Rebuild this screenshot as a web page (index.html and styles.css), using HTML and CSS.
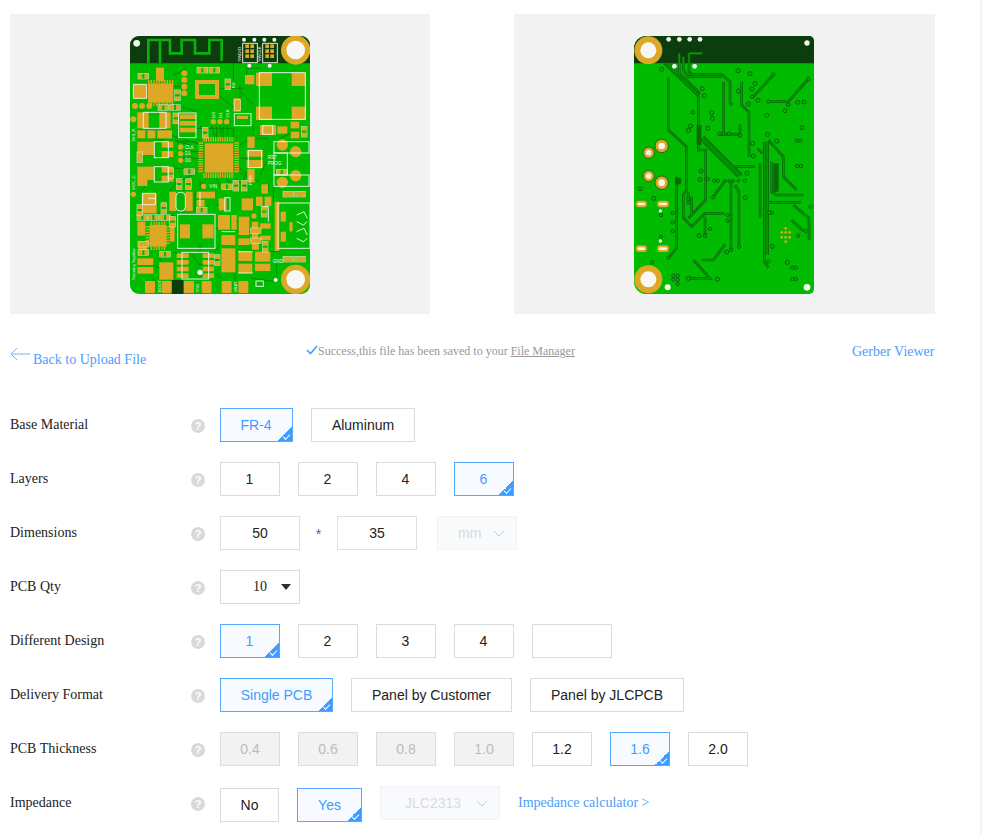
FILE: index.html
```html
<!DOCTYPE html>
<html lang="en">
<head>
<meta charset="utf-8">
<title>PCB order</title>
<link rel="stylesheet" href="styles.css">
</head>
<body>
<div class="page">
  <section class="gallery">
    <div class="card">
      <svg class="board" viewBox="30 33 540 774" width="180" height="258">
        <defs>
          <g id="rh"><rect class="g" x="0" y="0" width="12" height="15"/><rect class="g" x="18" y="0" width="12" height="15"/><rect class="s" x="-1" y="-1" width="32" height="17"/></g>
          <g id="rv"><rect class="g" x="0" y="0" width="15" height="12"/><rect class="g" x="0" y="18" width="15" height="12"/><rect class="s" x="-1" y="-1" width="17" height="32"/></g>
          <g id="hdr"><rect class="g" x="0" y="0" width="11" height="11"/><rect class="g" x="15" y="0" width="11" height="11"/><rect class="g" x="0" y="15" width="11" height="11"/><rect class="g" x="15" y="15" width="11" height="11"/><rect class="g" x="0" y="30" width="11" height="11"/><rect class="g" x="15" y="30" width="11" height="11"/></g>
        </defs>
        <path class="fr" d="M30 60a27 27 0 0 1 27-27H543a27 27 0 0 1 27 27V780a27 27 0 0 1-27 27H57a27 27 0 0 1-27-27Z"/>
        <path class="mask" d="M30 115V60a27 27 0 0 1 27-27H543a27 27 0 0 1 27 27V115Z"/>
        <path class="mask" d="M155 765h35v42h-35Z"/>
        <path class="ant" d="M85 115V45H150V85H185V45H225V85H268V45H305V108M120 115V45"/>
        <g class="dtrace">
          <path d="M160 150 200 130M150 330 250 360M360 200 400 240M290 305 290 340M310 305 310 340M420 450 440 410M450 420 470 380M370 470 380 440M180 380H250M180 400H250M240 470V500M400 560V600M215 690 240 720 300 700M150 500 170 470M360 180V240M60 500 90 470M480 340 520 320"/>
          <path d="M230 310H340V335M240 300 262 335M275 300 285 335M300 300 305 335M320 300 325 335M345 460 385 490M320 460 340 490M290 460 300 480M260 460 240 480M225 350H170M225 365 165 345M225 430H160V415M225 445 160 480M360 360 385 345M360 400H380M360 430 385 450M360 445 420 470M120 200H90M165 240 230 260M160 185H185M300 190H370M300 215 345 250M340 115V165M380 180V130H420M400 300V330M410 340 450 340M100 345H130M60 340V350M130 300V330M60 545V580M110 560 170 575M225 500V560M285 540H300M285 610 300 610M300 660 285 680M350 620 395 620M395 665V680M445 480V500M460 490V530M450 680 480 680M470 720V755M395 760 470 770M120 680V710M160 680 180 690M100 720 118 730M100 760V770M240 660V685M285 745 305 760M345 745V770M350 590H370"/>
        </g>
        <g class="gold">
          <rect x="84" y="175" width="76" height="58"/><rect x="108" y="128" width="24" height="40"/>
          <rect x="225" y="165" width="72" height="12"/><rect x="225" y="210" width="72" height="12"/><rect x="225" y="165" width="12" height="57"/><rect x="285" y="165" width="12" height="57"/>
          <rect x="40" y="178" width="40" height="42"/>
          <rect x="375" y="150" width="28" height="28"/><rect x="408" y="143" width="48" height="40"/><rect x="515" y="143" width="42" height="40"/><rect x="408" y="245" width="48" height="40"/><rect x="515" y="245" width="42" height="40"/>
          <rect x="52" y="262" width="34" height="48"/><rect x="118" y="262" width="34" height="48"/><rect x="52" y="316" width="24" height="24"/><rect x="82" y="316" width="24" height="24"/><rect x="112" y="316" width="44" height="24"/>
          <rect x="180" y="268" width="48" height="14"/><rect x="180" y="288" width="48" height="14"/><rect x="180" y="308" width="48" height="14"/>
          <rect x="254" y="355" width="86" height="88"/>
          <rect x="340" y="220" width="22" height="40"/><rect x="350" y="272" width="34" height="10"/>
          <rect x="420" y="300" width="48" height="30"/><rect x="472" y="304" width="30" height="22"/><rect x="512" y="290" width="26" height="20"/><rect x="512" y="320" width="26" height="20"/>
          <rect x="380" y="375" width="48" height="20"/><rect x="380" y="405" width="48" height="24"/><rect x="382" y="335" width="22" height="34"/><rect x="382" y="432" width="22" height="40"/>
          <rect x="52" y="350" width="50" height="40"/><rect x="125" y="350" width="35" height="18"/><rect x="125" y="378" width="35" height="18"/><rect x="52" y="380" width="14" height="25"/>
          <rect x="52" y="425" width="50" height="40"/><rect x="125" y="425" width="35" height="18"/><rect x="125" y="452" width="35" height="18"/><rect x="52" y="465" width="30" height="18"/>
          <rect x="65" y="505" width="45" height="60"/><rect x="148" y="500" width="20" height="58"/><rect x="196" y="500" width="22" height="58"/>
          <rect x="230" y="500" width="55" height="20"/><rect x="230" y="525" width="24" height="20"/>
          <rect x="180" y="598" width="30" height="42"/><rect x="247" y="598" width="34" height="42"/>
          <rect x="296" y="520" width="24" height="36"/><rect x="365" y="520" width="34" height="36"/>
          <rect x="294" y="570" width="36" height="44"/><rect x="334" y="570" width="16" height="44"/><rect x="356" y="575" width="32" height="55"/>
          <rect x="304" y="670" width="42" height="72"/><rect x="304" y="630" width="42" height="30"/>
          <rect x="355" y="680" width="42" height="28"/><rect x="355" y="716" width="42" height="28"/><rect x="405" y="680" width="46" height="30"/><rect x="405" y="716" width="46" height="22"/>
          <rect x="420" y="595" width="32" height="16"/><rect x="420" y="632" width="32" height="14"/><rect x="395" y="590" width="20" height="70"/><rect x="408" y="515" width="20" height="28"/><rect x="434" y="515" width="20" height="28"/><rect x="424" y="478" width="20" height="28"/>
          <rect x="355" y="640" width="34" height="20"/><rect x="395" y="660" width="22" height="14"/>
          <rect x="464" y="530" width="14" height="148"/><rect x="482" y="560" width="16" height="30"/><rect x="482" y="620" width="16" height="30"/><rect x="508" y="590" width="10" height="30" rx="5"/>
          <rect x="490" y="500" width="24" height="14"/><rect x="530" y="500" width="24" height="14"/><rect x="490" y="695" width="24" height="14"/><rect x="530" y="695" width="24" height="14"/>
          <rect x="88" y="600" width="52" height="65"/><rect x="52" y="590" width="24" height="42"/><rect x="55" y="650" width="26" height="26"/><rect x="150" y="600" width="14" height="50"/>
          <rect x="52" y="700" width="48" height="20"/><rect x="52" y="726" width="48" height="20"/><rect x="118" y="712" width="42" height="52"/>
          <rect x="170" y="685" width="36" height="14"/><rect x="170" y="705" width="36" height="14"/><rect x="170" y="725" width="36" height="14"/><rect x="170" y="745" width="36" height="14"/>
          <rect x="248" y="685" width="34" height="14"/><rect x="248" y="705" width="34" height="14"/><rect x="248" y="725" width="34" height="14"/><rect x="248" y="745" width="34" height="14"/>
          <rect x="75" y="768" width="30" height="36" rx="4"/><rect x="125" y="768" width="30" height="36" rx="4"/><rect x="192" y="768" width="30" height="36" rx="4"/><rect x="245" y="768" width="30" height="36" rx="4"/><rect x="305" y="768" width="30" height="36" rx="4"/><rect x="355" y="768" width="30" height="36" rx="4"/>
          <circle cx="193" cy="145" r="9"/><circle cx="193" cy="165" r="9"/><circle cx="193" cy="185" r="9"/><circle cx="193" cy="205" r="9"/>
          <circle cx="45" cy="243" r="9"/><circle cx="66" cy="243" r="9"/><circle cx="88" cy="243" r="9"/><circle cx="40" cy="283" r="9"/>
          <circle cx="280" cy="290" r="8"/><circle cx="300" cy="290" r="8"/><circle cx="320" cy="290" r="8"/>
          <circle cx="182" cy="366" r="8"/><circle cx="182" cy="386" r="8"/><circle cx="182" cy="406" r="8"/>
          <circle cx="251" cy="484" r="8"/><circle cx="40" cy="508" r="8"/><circle cx="402" cy="573" r="8"/>
          <circle cx="487" cy="360" r="17"/><circle cx="527" cy="380" r="17"/><circle cx="527" cy="452" r="17"/><circle cx="487" cy="472" r="17"/>
          <circle cx="527" cy="75" r="44"/><circle cx="527" cy="763" r="44"/>
        </g>
        <g class="pins">
          <path d="M250 343H342M250 452H342M242 352V444M350 352V444"/>
          <path class="pins-sm" d="M84 170H160M84 238H160M92 595H136M92 670H136M82 604V660M144 604V660"/>
        </g>
        <g class="parts">
          <use href="#hdr" x="376" y="58"/><use href="#hdr" x="436" y="58"/>
          <use href="#rh" x="232" y="128"/><use href="#rh" x="268" y="128"/><use href="#rh" x="55" y="146"/><use href="#rv" x="316" y="163"/>
          <use href="#rh" x="115" y="240"/><use href="#rh" x="150" y="240"/><use href="#rv" x="160" y="265"/><use href="#rv" x="248" y="308"/><use href="#rv" x="165" y="196"/>
          <use href="#rh" x="193" y="432"/><use href="#rv" x="170" y="462"/><use href="#rv" x="198" y="462"/><use href="#rv" x="52" y="382"/><use href="#rv" x="145" y="430"/>
          <use href="#rh" x="306" y="478"/><use href="#rv" x="340" y="467"/><use href="#rv" x="365" y="467"/><use href="#rv" x="345" y="225"/>
          <use href="#rv" x="124" y="534"/><use href="#rh" x="52" y="570"/><use href="#rh" x="85" y="570"/><use href="#rh" x="120" y="570"/><use href="#rv" x="150" y="575"/><use href="#rv" x="52" y="540"/>
          <use href="#rh" x="55" y="650"/><use href="#rh" x="55" y="675"/><use href="#rh" x="120" y="680"/><use href="#rv" x="284" y="690"/>
          <use href="#rh" x="230" y="548"/><use href="#rv" x="425" y="545"/><use href="#rv" x="428" y="650"/><use href="#rh" x="392" y="610"/><use href="#rh" x="392" y="640"/>
          <use href="#rv" x="545" y="305"/><use href="#rh" x="470" y="434"/><use href="#rh" x="490" y="500"/><use href="#rh" x="525" y="500"/><use href="#rh" x="490" y="695"/><use href="#rh" x="525" y="695"/>
        </g>
        <g class="silk">
          <rect x="418" y="143" width="138" height="140"/><rect x="176" y="264" width="52" height="74"/><rect x="343" y="266" width="50" height="36"/>
          <rect x="70" y="262" width="68" height="48"/><rect x="103" y="350" width="42" height="48"/><rect x="103" y="425" width="42" height="46"/>
          <rect x="173" y="568" width="112" height="102"/><rect x="186" y="682" width="80" height="80"/><rect x="314" y="518" width="16" height="40"/>
          <rect x="462" y="350" width="105" height="34"/><rect x="462" y="384" width="40" height="66"/><rect x="462" y="450" width="105" height="34"/>
          <rect x="474" y="534" width="96" height="136"/><rect x="68" y="505" width="38" height="34"/>
          <rect x="168" y="502" width="28" height="56" rx="12"/><rect x="368" y="55" width="44" height="58"/><rect x="428" y="55" width="44" height="58"/>
          <rect x="428" y="302" width="30" height="26"/><rect x="385" y="376" width="40" height="52"/><rect x="408" y="768" width="22" height="16"/>
          <path d="M530 570 552 560 562 580M530 590 550 600 562 590M530 620 552 610 562 630M530 640 550 650 562 640M428 545H445V590M305 620H345M354 680H398M354 744H398M40 178H80V220H40ZM85 520H105M240 500V545"/>
        </g>
        <g class="hole">
          <circle cx="527" cy="75" r="28"/><circle cx="527" cy="763" r="28"/>
          <circle cx="50" cy="55" r="10"/><circle cx="372" cy="44" r="6"/><circle cx="403" cy="44" r="6"/><circle cx="433" cy="44" r="6"/><circle cx="463" cy="44" r="6"/><circle cx="388" cy="122" r="6"/><circle cx="449" cy="122" r="6"/><circle cx="240" cy="742" r="8"/><circle cx="467" cy="765" r="6"/>
        </g>
        <g class="pcbtext">
          <text x="195" y="372">CLK</text><text x="195" y="391">D1</text><text x="195" y="411">D0</text>
          <text x="443" y="403">RST</text><text x="443" y="420">PROG</text><text x="268" y="488">VIN</text><text x="458" y="714">GND</text>
          <text class="tv" transform="translate(344 190) rotate(-90)">RX</text>
          <text class="tv" transform="translate(286 278) rotate(-90)">D0</text><text class="tv" transform="translate(306 278) rotate(-90)">D1</text><text class="tv" transform="translate(326 278) rotate(-90)">CLK</text>
          <text class="tv" transform="translate(45 350) rotate(-90)">3V3_R</text><text class="tv" transform="translate(45 495) rotate(-90)">VCC_C</text>
          <text class="tv" transform="translate(45 765) rotate(-90)">Seeeing Suptlee</text><text class="tv" transform="translate(122 802) rotate(-90)">BOOT</text><text class="tv" transform="translate(238 802) rotate(-90)">T/IO</text><text class="tv" transform="translate(350 802) rotate(-90)">VBAT</text>
          <text class="tv" transform="translate(362 110) rotate(-90)">SWDIO</text><text class="tv" transform="translate(424 110) rotate(-90)">SWCLK</text><text class="tv" transform="translate(396 480) rotate(-90)">PCM</text>
        </g>
      </svg>
    </div>
    <div class="card card-back">
      <svg class="board" viewBox="27 33 540 774" width="180" height="258">
        <path class="fr" d="M27 70a37 37 0 0 1 37-37H552a15 15 0 0 1 15 15V792a15 15 0 0 1-15 15H64a37 37 0 0 1-37-37Z"/>
        <path class="mask" d="M27 115V70a37 37 0 0 1 37-37H552a15 15 0 0 1 15 15V115Z"/>
        <defs>
          <path id="tracks" d="M130 158V315L184 365V495L175 510V578L200 605 240 565H298M118 115 220 212V380M135 115 225 205M163 85V150L215 205M175 95V135L190 155H290M192 85 H232M192 85V140L200 148H290L315 170V235L322 240M296 170V328M280 328H345V298M350 170V240L372 262V395M385 215 445 150M430 230H490L550 162M225 340 340 455M235 335 350 450M225 375H242V525L190 580M155 455V670L130 698M155 465H165M240 575V630M190 500V535M200 515V565M300 468 265 515M318 470V675M330 480 342 500V665M418 350V710L430 728M428 350V690M398 370 412 385M405 415V578M430 345 475 395V455L515 495M440 410V500L455 510H535M428 532H528M505 540 552 580V645M500 585 535 618M205 705 255 760H200L190 758M230 705H265L300 658M330 425H390"/>
        </defs>
        <use class="trk-o" href="#tracks"/>
        <use class="trk-i" href="#tracks"/>
        <rect class="dark" x="215" y="300" width="14" height="60"/><rect class="dark" x="445" y="415" width="16" height="85"/><rect class="dark" x="150" y="458" width="18" height="20"/>
        <g class="via">
          <circle cx="110" cy="133" r="6"/><circle cx="232" cy="191" r="6"/><circle cx="238" cy="212" r="6"/><circle cx="260" cy="263" r="6"/><circle cx="262" cy="280" r="6"/><circle cx="197" cy="303" r="6"/><circle cx="190" cy="316" r="6"/><circle cx="248" cy="310" r="6"/><circle cx="204" cy="262" r="5"/>
          <circle cx="339" cy="137" r="6"/><circle cx="375" cy="146" r="6"/><circle cx="390" cy="176" r="6"/><circle cx="381" cy="192" r="6"/><circle cx="340" cy="198" r="6"/><circle cx="370" cy="237" r="6"/><circle cx="399" cy="226" r="6"/><circle cx="425" cy="271" r="6"/><circle cx="480" cy="257" r="6"/><circle cx="518" cy="232" r="6"/><circle cx="537" cy="231" r="6"/><circle cx="531" cy="308" r="6"/>
          <circle cx="428" cy="328" r="6"/><circle cx="455" cy="348" r="6"/><circle cx="383" cy="355" r="6"/><circle cx="385" cy="393" r="6"/><circle cx="515" cy="347" r="5"/><circle cx="526" cy="347" r="5"/><circle cx="516" cy="423" r="5"/><circle cx="528" cy="423" r="5"/>
          <circle cx="228" cy="438" r="6"/><circle cx="225" cy="464" r="6"/><circle cx="248" cy="462" r="5"/><circle cx="268" cy="467" r="5"/><circle cx="278" cy="467" r="5"/><circle cx="366" cy="445" r="6"/><circle cx="361" cy="518" r="6"/><circle cx="360" cy="467" r="5"/>
          <circle cx="45" cy="491" r="6"/><circle cx="86" cy="520" r="6"/><circle cx="108" cy="570" r="5"/><circle cx="108" cy="635" r="5"/><circle cx="143" cy="564" r="5"/><circle cx="143" cy="592" r="5"/><circle cx="143" cy="618" r="5"/>
          <circle cx="190" cy="520" r="5"/><circle cx="190" cy="533" r="5"/><circle cx="308" cy="570" r="5"/><circle cx="308" cy="587" r="5"/><circle cx="255" cy="612" r="5"/><circle cx="222" cy="632" r="6"/><circle cx="240" cy="632" r="5"/><circle cx="305" cy="681" r="6"/>
          <circle cx="441" cy="563" r="5"/><circle cx="433" cy="563" r="5"/><circle cx="442" cy="664" r="6"/><circle cx="487" cy="712" r="6"/><circle cx="502" cy="728" r="5"/><circle cx="512" cy="728" r="5"/><circle cx="502" cy="762" r="5"/><circle cx="512" cy="762" r="5"/><circle cx="557" cy="545" r="5"/><circle cx="519" cy="632" r="5"/><circle cx="542" cy="618" r="5"/>
          <circle cx="145" cy="752" r="5"/><circle cx="158" cy="752" r="5"/><circle cx="145" cy="764" r="5"/><circle cx="158" cy="764" r="5"/><circle cx="158" cy="777" r="5"/><circle cx="81" cy="712" r="5"/><circle cx="190" cy="760" r="6"/><circle cx="277" cy="762" r="6"/><circle cx="130" cy="698" r="5"/><circle cx="430" cy="710" r="5"/>
          <circle cx="284" cy="326" r="5"/><circle cx="296" cy="326" r="5"/><circle cx="312" cy="326" r="5"/><circle cx="345" cy="332" r="5"/><circle cx="300" cy="468" r="4"/><circle cx="312" cy="468" r="4"/><circle cx="324" cy="468" r="4"/><circle cx="340" cy="467" r="4"/>
          <circle cx="265" cy="517" r="5"/><circle cx="318" cy="675" r="5"/><circle cx="342" cy="665" r="5"/><circle cx="430" cy="230" r="5"/><circle cx="490" cy="240" r="5"/><circle cx="550" cy="162" r="5"/><circle cx="445" cy="148" r="5"/><circle cx="381" cy="215" r="5"/>
        </g>
        <g class="gold">
          <circle cx="70" cy="76" r="42"/><circle cx="70" cy="763" r="42"/>
          <circle class="ring" cx="110" cy="363" r="20"/><circle class="ring" cx="71" cy="383" r="17"/><circle class="ring" cx="71" cy="453" r="17"/><circle class="ring" cx="110" cy="473" r="20"/>
          <rect x="32" y="527" width="34" height="20" rx="10"/><rect x="96" y="527" width="36" height="20" rx="10"/><rect x="32" y="661" width="34" height="20" rx="10"/><rect x="96" y="661" width="36" height="20" rx="10"/>
          <circle cx="482" cy="610" r="4"/><circle cx="470" cy="622" r="4"/><circle cx="482" cy="622" r="4"/><circle cx="494" cy="622" r="4"/><circle cx="470" cy="637" r="4"/><circle cx="482" cy="637" r="4"/><circle cx="494" cy="637" r="4"/><circle cx="482" cy="650" r="4"/>
        </g>
        <g class="hole">
          <circle cx="70" cy="76" r="24"/><circle cx="70" cy="763" r="24"/>
          <circle cx="110" cy="363" r="10"/><circle cx="110" cy="473" r="10"/><circle cx="71" cy="383" r="8"/><circle cx="71" cy="453" r="8"/>
          <rect x="38" y="533" width="22" height="8" rx="4"/><rect x="102" y="533" width="24" height="8" rx="4"/><rect x="38" y="667" width="22" height="8" rx="4"/><rect x="102" y="667" width="24" height="8" rx="4"/>
          <circle cx="131" cy="43" r="7"/><circle cx="163" cy="43" r="7"/><circle cx="194" cy="43" r="7"/><circle cx="225" cy="43" r="7"/><circle cx="148" cy="124" r="7"/><circle cx="209" cy="124" r="7"/>
          <circle cx="546" cy="54" r="8"/><circle cx="128" cy="787" r="9"/><circle cx="546" cy="787" r="10"/><circle cx="106" cy="558" r="5"/><circle cx="106" cy="648" r="5"/>
        </g>
      </svg>
    </div>
  </section>

  <section class="status">
    <a class="back">
      <svg class="arrow" viewBox="0 0 20 14" width="20" height="14"><path d="M7 1 1 7l6 6M1 7h19"/></svg>
      <span class="back-text">Back to Upload File</span>
    </a>
    <p class="saved"><svg class="tick" viewBox="0 0 12 10" width="12" height="10"><path d="M1 5l3.500 3.500L11 1"/></svg>Success,this file has been saved to your <u>File Manager</u></p>
    <a class="gerber">Gerber Viewer</a>
  </section>

  <form class="spec">
    <div class="row">
      <span class="label">Base Material</span><i class="hint">?</i>
      <div class="opts">
        <span class="opt n on w73">FR-4</span><span class="opt w104">Aluminum</span>
      </div>
    </div>
    <div class="row">
      <span class="label">Layers</span><i class="hint">?</i>
      <div class="opts">
        <span class="opt n">1</span><span class="opt n">2</span><span class="opt n">4</span><span class="opt n on">6</span>
      </div>
    </div>
    <div class="row">
      <span class="label">Dimensions</span><i class="hint">?</i>
      <div class="opts dims">
        <span class="opt field w80">50</span><span class="times">*</span><span class="opt field w80">35</span>
        <span class="sel w80"><span>mm</span><svg class="chev" viewBox="0 0 12 7" width="12" height="7"><path d="M1 1l5 5 5-5"/></svg></span>
      </div>
    </div>
    <div class="row">
      <span class="label">PCB Qty</span><i class="hint">?</i>
      <div class="opts">
        <span class="opt w80 qty"><span>10</span><b class="tri"></b></span>
      </div>
    </div>
    <div class="row">
      <span class="label">Different Design</span><i class="hint">?</i>
      <div class="opts">
        <span class="opt n on">1</span><span class="opt n">2</span><span class="opt n">3</span><span class="opt n">4</span><span class="opt w80"></span>
      </div>
    </div>
    <div class="row">
      <span class="label">Delivery Format</span><i class="hint">?</i>
      <div class="opts">
        <span class="opt on w113">Single PCB</span><span class="opt w161">Panel by Customer</span><span class="opt w154">Panel by JLCPCB</span>
      </div>
    </div>
    <div class="row">
      <span class="label">PCB Thickness</span><i class="hint">?</i>
      <div class="opts">
        <span class="opt off">0.4</span><span class="opt off">0.6</span><span class="opt off">0.8</span><span class="opt off">1.0</span><span class="opt">1.2</span><span class="opt on">1.6</span><span class="opt">2.0</span>
      </div>
    </div>
    <div class="row">
      <span class="label">Impedance</span><i class="hint">?</i>
      <div class="opts imp">
        <span class="opt w59">No</span><span class="opt on w65">Yes</span>
        <span class="sel w120"><span>JLC2313</span><svg class="chev" viewBox="0 0 12 7" width="12" height="7"><path d="M1 1l5 5 5-5"/></svg></span>
        <a class="calc">Impedance calculator &gt;</a>
      </div>
    </div>
  </form>
</div>
</body>
</html>
```
FILE: styles.css
```css
html, body { margin: 0; padding: 0; background: #fff; }
body { font-family: "Liberation Serif", serif; color: #222; }

.page {
  width: 980px;
  height: 834px;
  overflow: hidden;
  border-right: 2px solid #f1f1f6;
}

.gallery { display: flex; gap: 84px; padding: 14px 0 0 10px; }
.card {
  width: 420px;
  height: 300px;
  background: #f2f2f2;
  display: flex;
  justify-content: center;
  align-items: center;
}
.card-back { width: 421px; padding-right: 1px; box-sizing: border-box; }
.board { display: block; margin-top: 2px; }

.fr { fill: #00bb00; }
.mask { fill: #0c3d0c; }
.dark { fill: #0a6a0a; }
.ant { fill: none; stroke: #0cb00c; stroke-width: 8; }
.dtrace path { fill: none; stroke: #028d02; stroke-width: 3; }
.gold, .g { fill: #dda826; }
.s { fill: none; stroke: #f2f4ee; stroke-width: 2; opacity: .75; }
.pins path { fill: none; stroke: #dda826; stroke-width: 14; stroke-dasharray: 4 3; }
.pins .pins-sm { stroke-width: 10; stroke-dasharray: 4 4; }
.silk rect, .silk path { fill: none; stroke: #f2f4ee; stroke-width: 3; opacity: .92; }
.hole { fill: #f7f7f4; }
.pcbtext text { fill: #f4f4f4; font-family: "Liberation Sans", sans-serif; font-size: 14px; }
.pcbtext .tv { font-size: 13px; }
.trk-o { fill: none; stroke: #0a6a0a; stroke-width: 8; }
.trk-i { fill: none; stroke: #00a800; stroke-width: 3; }
.via circle { fill: #00bb00; stroke: #0a5f0a; stroke-width: 3; }
.gold .ring { stroke: #0c3d0c; stroke-width: 2; }

.status {
  display: flex;
  align-items: flex-start;
  height: 94px;
  padding-left: 10px;
  font-size: 14px;
  color: #4d9dfb;
}
.back { display: flex; width: 296px; padding-top: 33px; }
.arrow { fill: none; stroke: #72b4fb; stroke-width: 1; margin-right: 3px; flex: none; }
.back-text { margin-top: 5px; line-height: 16px; }
.saved { margin: 0; padding-top: 30px; width: 546px; font-size: 12px; line-height: 14px; color: #999; white-space: nowrap; }
.tick { fill: none; stroke: #409eff; stroke-width: 1.6; }
.gerber { padding-top: 30px; line-height: 16px; white-space: nowrap; }

.spec { display: flex; flex-direction: column; gap: 20px; padding-left: 10px; }
.row { display: flex; align-items: center; height: 34px; }
.label { width: 181px; font-size: 14px; line-height: 16px; margin-top: -1px; color: #222; }
.hint {
  width: 14px;
  height: 14px;
  border-radius: 50%;
  background: #d9d9d9;
  color: #fff;
  font: bold 11px/14px "Liberation Sans", sans-serif;
  text-align: center;
  margin-right: 15px;
  margin-top: 2px;
}
.opts { display: flex; align-items: center; gap: 18px; }

.opt {
  position: relative;
  box-sizing: border-box;
  display: flex;
  justify-content: center;
  align-items: center;
  width: 60px;
  height: 34px;
  background: #fff;
  border: 1px solid #dcdcdc;
  font: 14px/1 "Liberation Sans", sans-serif;
  color: #222;
}
.n { padding-right: 1px; }
.field { border-color: #dcdfe6; }
.on { border-color: #55a8fd; background: #f7fbff; color: #3c9cff; }
.on::after {
  content: "";
  position: absolute;
  right: 0;
  bottom: 0;
  width: 14px;
  height: 14px;
  background: linear-gradient(135deg, transparent 50%, #3c9cff 50%);
}
.on::before {
  content: "";
  position: absolute;
  z-index: 1;
  right: 2px;
  bottom: 3px;
  width: 6px;
  height: 3px;
  border-left: 1px solid #fff;
  border-bottom: 1px solid #fff;
  transform: rotate(-45deg);
}
.off { background: #f2f2f2; color: #bbb; }

.w59 { width: 59px; }
.w65 { width: 65px; }
.w73 { width: 73px; }
.w80 { width: 80px; }
.w104 { width: 104px; }
.w113 { width: 113px; }
.w120 { width: 120px; }
.w154 { width: 154px; }
.w161 { width: 161px; }

.dims { gap: 0; }
.times {
  width: 37px;
  text-align: center;
  margin-top: 2px;
  font: 14px/1 "Liberation Sans", sans-serif;
  color: #3c6ea5;
}
.sel {
  box-sizing: border-box;
  height: 34px;
  display: flex;
  justify-content: space-between;
  align-items: center;
  padding: 0 11px 0 20px;
  background: #f9fafc;
  border: 1px solid #f2f3f6;
  font: 14px/1 "Liberation Sans", sans-serif;
  color: #d8dae0;
}
.dims .sel { margin-left: 20px; }
.chev { fill: none; stroke: #c6c9d0; stroke-width: 1; }
.qty { justify-content: flex-start; padding-left: 32px; font-family: "Liberation Serif", serif; }
.tri {
  margin-left: 14px;
  width: 0;
  height: 0;
  border-left: 5px solid transparent;
  border-right: 5px solid transparent;
  border-top: 6px solid #2d2f3e;
}
.imp { align-self: flex-start; align-items: flex-start; }
.imp .opt { margin-top: 2px; }
.imp .sel { padding: 0 11px 0 24px; }
.calc { font: 14px/16px "Liberation Serif", serif; color: #4d9dfb; white-space: nowrap; margin-top: 9px; }
```
